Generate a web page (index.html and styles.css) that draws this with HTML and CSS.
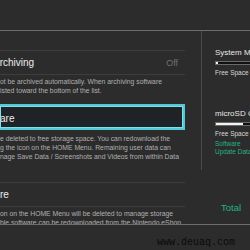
FILE: index.html
```html
<!DOCTYPE html>
<html>
<head>
  <meta charset="UTF-8">
  <title>Data Management</title>
  <link rel="stylesheet" href="styles.css">
</head>
<body>
  <div class="screen">
    <div class="header"></div>

    <div class="main">
      <div class="list">
        <div class="row blank"></div>

        <div class="row">
          <span class="row-title cut">Archiving</span>
          <span class="row-value">Off</span>
        </div>
        <p class="desc first">
          ot be archived automatically. When archiving software<br>
          isted toward the bottom of the list.
        </p>

        <div class="row selected">
          <span class="row-title">are</span>
        </div>
        <p class="desc second">
          e deleted to free storage space. You can redownload the<br>
          g the icon on the HOME Menu. Remaining user data can<br>
          nage Save Data / Screenshots and Videos from within Data
        </p>

        <div class="row framed">
          <span class="row-title">re</span>
        </div>
        <p class="desc third">
          on on the HOME Menu will be deleted to manage storage<br>
          ble software can be redownloaded from the Nintendo eShop
        </p>
      </div>

      <div class="scrollbar"></div>

      <div class="side">
        <div class="storage-name system">System Memory</div>
        <div class="bar"><span class="fill" style="width: 2px"></span></div>
        <div class="storage-label">Free Space</div>

        <div class="storage-name sd">microSD Card</div>
        <div class="bar"><span class="fill" style="width: 27px"></span></div>
        <div class="storage-label">Free Space</div>
        <div class="storage-label green first-green">Software</div>
        <div class="storage-label green">Update Data</div>

        <div class="total">Total</div>
      </div>
    </div>

    <div class="footer">
      <span class="watermark">www.deuaq.com</span>
    </div>
  </div>
</body>
</html>
```

FILE: styles.css
```css
body {
  margin: 0;
  background-color: #2c2c2c;
  font-family: "Liberation Sans", Arial, sans-serif;
  overflow: hidden;
}

.screen {
  width: 250px;
  height: 250px;
  display: flex;
  flex-direction: column;
  overflow: hidden;
}

.header {
  height: 30px;
  flex-shrink: 0;
  border-bottom: 1px solid #6c6c6c;
}

.main {
  height: 193px;
  flex-shrink: 0;
  display: flex;
  overflow: hidden;
}

/* left list, cut off by the screen edge */
.list {
  width: 185px;
  flex-shrink: 0;
  overflow: hidden;
}

.row {
  height: 24px;
  display: flex;
  align-items: center;
  justify-content: space-between;
  border-bottom: 1px solid #3d3d3d;
  box-sizing: border-box;
  padding-right: 7px;
}

.row.blank {
  height: 20px;
}

.row.framed {
  margin-top: 21px;
  height: 25px;
  border-top: 1px solid #3d3d3d;
}

.row-title {
  color: #ececec;
  font-size: 10px;
  white-space: nowrap;
}

.row-title.cut {
  margin-left: -7px;
}

.row-value {
  color: #707070;
  font-size: 9px;
}

.row.selected {
  height: 26px;
  margin-top: 9px;
  padding-top: 3px;
  background-color: #1f2226;
  border: 2px solid #52c9d6;
  border-left: none;
  box-shadow: inset 0 0 0 1px #7fe0e6;
}

.desc {
  margin: 0;
  color: #b0b0b0;
  font-size: 6.8px;
  line-height: 9px;
  white-space: nowrap;
}

.desc.first {
  padding-top: 2px;
}

.desc.second {
  padding-top: 4px;
}

.desc.third {
  padding-top: 2px;
}

.scrollbar {
  width: 1px;
  height: 139px;
  margin-left: 16px;
  background-color: #4b4b4b;
  flex-shrink: 0;
}

/* storage panel on the right */
.side {
  flex: 1;
  padding-left: 13px;
  overflow: hidden;
  white-space: nowrap;
}

.storage-name {
  color: #e8e8e8;
  font-size: 8px;
  line-height: 10px;
}

.storage-name.system {
  margin-top: 17px;
}

.storage-name.sd {
  margin-top: 32px;
}

.bar {
  width: 60px;
  height: 4px;
  margin-top: 3px;
  background-color: #111;
  border: 1px solid #6a6a6a;
  box-sizing: border-box;
  display: flex;
}

.bar .fill {
  display: block;
  height: 100%;
  background-color: #f2f2f2;
}

.storage-label {
  color: #d8d8d8;
  font-size: 6.5px;
  line-height: 8px;
  margin-top: 4px;
}

.storage-label.first-green {
  margin-top: 2px;
}

.storage-label.green {
  color: #24b383;
}

.storage-label.green + .storage-label.green {
  margin-top: 0;
}

.total {
  margin-top: 47px;
  margin-left: 6px;
  color: #24b383;
  font-size: 9.5px;
  line-height: 10px;
}

.footer {
  flex: 1;
  border-top: 1px solid #6c6c6c;
  display: flex;
  align-items: center;
  padding-left: 157px;
}

.watermark {
  color: #0a0a0a;
  font-family: "Liberation Mono", "Courier New", monospace;
  font-size: 10px;
  margin-top: 10px;
}
```
